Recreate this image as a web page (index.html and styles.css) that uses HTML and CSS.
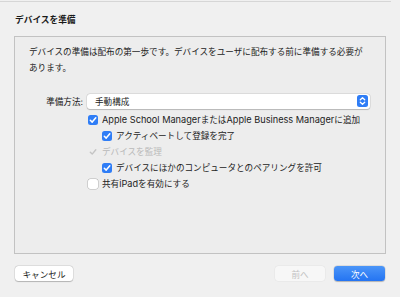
FILE: index.html
```html
<!DOCTYPE html>
<html lang="ja">
<head>
  <meta charset="UTF-8" />
  <title>デバイスを準備</title>
  <link rel="stylesheet" href="styles.css">
</head>
<body>

  <div class="topline"></div>

  <h1 class="title">デバイスを準備</h1>

  <div class="panel">
    <p class="desc">デバイスの準備は配布の第一歩です。デバイスをユーザに配布する前に準備する必要があります。</p>

    <div class="row">
      <span class="label">準備方法:</span>
      <div class="popup">
        <span>手動構成</span>
        <svg class="stepper" width="11" height="12" viewBox="0 0 11 12">
          <rect width="11" height="12" rx="2.5" fill="#2f7df6"/>
          <path d="M3.3 4.8 L5.5 2.8 L7.7 4.8 M3.3 7.2 L5.5 9.2 L7.7 7.2" fill="none" stroke="#fff" stroke-width="1.3" stroke-linecap="round" stroke-linejoin="round"/>
        </svg>
      </div>
    </div>

    <div class="checks">
      <div class="check">
        <span class="box on"><svg width="10" height="10" viewBox="0 0 10 10"><path d="M2.3 5.2 L4.2 7.1 L7.8 2.8" fill="none" stroke="#fff" stroke-width="1.5" stroke-linecap="round" stroke-linejoin="round"/></svg></span>
        <span><span class="en">Apple School Manager</span>または<span class="en">Apple Business Manager</span>に追加</span>
      </div>
      <div class="check sub">
        <span class="box on"><svg width="10" height="10" viewBox="0 0 10 10"><path d="M2.3 5.2 L4.2 7.1 L7.8 2.8" fill="none" stroke="#fff" stroke-width="1.5" stroke-linecap="round" stroke-linejoin="round"/></svg></span>
        アクティベートして登録を完了
      </div>
      <div class="check disabled">
        <span class="box dim"><svg width="10" height="10" viewBox="0 0 10 10"><path d="M2.3 5.2 L4.2 7.1 L7.8 2.8" fill="none" stroke="#c4c4c4" stroke-width="1.4" stroke-linecap="round" stroke-linejoin="round"/></svg></span>
        デバイスを監理
      </div>
      <div class="check sub">
        <span class="box on"><svg width="10" height="10" viewBox="0 0 10 10"><path d="M2.3 5.2 L4.2 7.1 L7.8 2.8" fill="none" stroke="#fff" stroke-width="1.5" stroke-linecap="round" stroke-linejoin="round"/></svg></span>
        デバイスにほかのコンピュータとのペアリングを許可
      </div>
      <div class="check">
        <span class="box"></span>
        <span>共有<span class="en">iPad</span>を有効にする</span>
      </div>
    </div>
  </div>

  <div class="footer">
    <button class="btn">キャンセル</button>
    <div class="nav">
      <button class="btn prev" disabled>前へ</button>
      <button class="btn next">次へ</button>
    </div>
  </div>

</body>
</html>
```

FILE: styles.css
```css
body {
  margin: 0;
  padding: 0;
  background-color: #f0f0f0;
  font-family: Inter, "Noto Sans CJK JP", sans-serif;
  font-size: 8.6px;
  color: #222;
  width: 400px;
  height: 297px;
  overflow: hidden;
}

.topline {
  margin-top: 1px;
  width: 391px;
  height: 1px;
  background-color: #d6d6d6;
}

.title {
  margin: 11px 0 9px 15px;
  font-size: 8.7px;
  line-height: 14px;
  font-weight: bold;
  color: #1a1a1a;
}

.panel {
  margin-left: 14px;
  width: 370px;
  height: 216px;
  border: 1px solid #c2c2c2;
  background-color: #ededed;
}

.desc {
  margin: 7px 0 0 14px;
  width: 342px;
  line-height: 16px;
}

.row {
  display: flex;
  align-items: center;
  margin-top: 17px;
  height: 16px;
}

.label {
  width: 68px;
  text-align: right;
  margin-right: 4px;
}

.popup {
  display: flex;
  align-items: center;
  justify-content: space-between;
  width: 273px;
  height: 15px;
  padding: 0 2px 0 8px;
  background-color: #fff;
  border-radius: 3px;
  box-shadow: 0 0 0 0.5px rgba(0, 0, 0, 0.12), 0 0.5px 1px rgba(0, 0, 0, 0.18);
}

.stepper {
  display: block;
}

.checks {
  margin-top: 3px;
  padding-left: 73px;
}

.check {
  display: flex;
  align-items: center;
  height: 16px;
  line-height: 16px;
}

.check.sub {
  padding-left: 14px;
}

.check.disabled {
  color: #b9b9b9;
}

.en {
  font-size: 9.2px;
}

.box {
  width: 10px;
  height: 10px;
  margin-right: 4px;
  border-radius: 2.5px;
  background-color: #fff;
  box-shadow: 0 0 0 0.5px rgba(0, 0, 0, 0.25);
  flex-shrink: 0;
}

.box svg {
  display: block;
}

.box.on {
  background-color: #2f7df6;
  box-shadow: none;
}

.box.dim {
  background-color: transparent;
  box-shadow: none;
}

.footer {
  display: flex;
  justify-content: space-between;
  align-items: center;
  margin: 12px 15px 0 15px;
}

.nav {
  display: flex;
  gap: 9px;
}

.btn {
  font-family: inherit;
  font-size: 8.6px;
  height: 15px;
  padding: 0;
  border: none;
  border-radius: 3.5px;
  background-color: #fff;
  color: #222;
  box-shadow: 0 0 0 0.5px rgba(0, 0, 0, 0.12), 0 0.5px 1px rgba(0, 0, 0, 0.2);
  width: 58px;
}

.btn.prev {
  width: 50px;
  color: #c2c2c2;
  background-color: #f7f7f7;
  box-shadow: 0 0 0 0.5px rgba(0, 0, 0, 0.05);
}

.btn.next {
  width: 51px;
  color: #fff;
  background: linear-gradient(#4b95f8, #2474f2);
}
```
